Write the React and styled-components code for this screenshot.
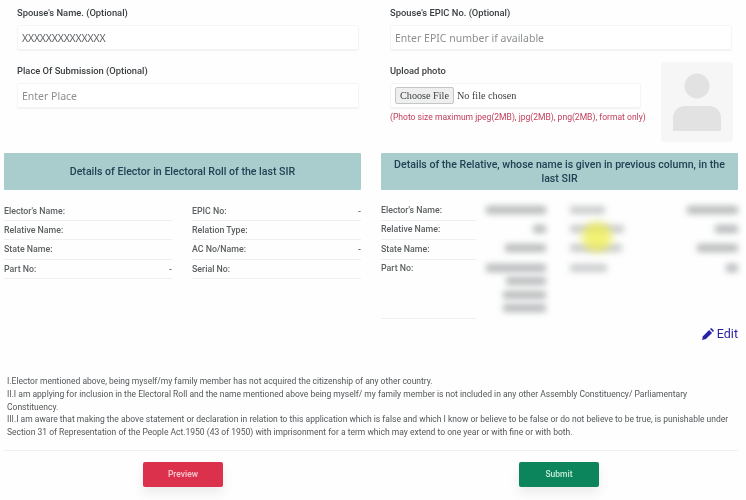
import React from 'react';
import styled, { createGlobalStyle } from 'styled-components';

const Global = createGlobalStyle`
    html, body {
        margin: 0;
        padding: 0;
        background: #fdfefd;
    }
    body {
        font-family: Roboto, "Liberation Sans", sans-serif;
        color: #3c4043;
    }
`

const Page = styled.div`
    position: relative;
    width: 746px;
    height: 500px;
    overflow: hidden;
    filter: blur(0.35px);
`

const FormGrid = styled.div`
    display: grid;
    grid-template-columns: 342px 342px;
    column-gap: 31px;
    padding: 7px 0 0 17px;
`

const Field = styled.div`
    display: flex;
    flex-direction: column;
    height: 58px;
`

const FieldLabel = styled.label`
    font-size: 9.35px;
    font-weight: 500;
    line-height: 12px;
    color: #3a3d40;
    margin-bottom: 6px;
`

const TextInput = styled.input`
    box-sizing: border-box;
    width: 100%;
    height: 25px;
    padding: 0 4px;
    border: 1px solid #f4f5f5;
    border-radius: 2px;
    box-shadow: 0 1px 1px rgba(0, 0, 0, 0.05);
    background: #fff;
    outline: none;
    font-family: "Noto Sans", sans-serif;
    font-size: 10.5px;
    letter-spacing: -0.2px;
    color: #5f6265;

    &::placeholder {
        color: #8c8f91;
        letter-spacing: 0;
        opacity: 1;
    }
`

const UploadRow = styled.div`
    display: flex;
    justify-content: space-between;
    height: 77px;
`

const UploadCol = styled.div`
    display: flex;
    flex-direction: column;
    width: 251px;
`

const FileBox = styled.div`
    box-sizing: border-box;
    display: flex;
    align-items: center;
    height: 25px;
    padding: 0 4px;
    border: 1px solid #f4f5f5;
    border-radius: 2px;
    box-shadow: 0 1px 1px rgba(0, 0, 0, 0.05);
    background: #fff;
`

const FileInput = styled.input`
    font-family: "Liberation Serif", serif;
    font-size: 10.2px;
    color: #3c4043;

    &::file-selector-button {
        font-family: "Liberation Serif", serif;
        font-size: 10.2px;
        height: 17px;
        padding: 0 4px;
        margin-right: 3px;
        border: 1px solid #c4c6c6;
        border-radius: 2px;
        background: #efefef;
        color: #3c4043;
    }
`

const Hint = styled.div`
    margin-top: 4px;
    font-size: 8.55px;
    line-height: 10px;
    color: #c2405c;
    white-space: nowrap;
`

const Avatar = styled.div`
    width: 72px;
    height: 80px;
    margin: -3px -1px 0 0;
    border-radius: 4px;
    background: #f6f6f6;
    overflow: hidden;
    flex-shrink: 0;
`

const Details = styled.div`
    display: grid;
    grid-template-columns: 357px 357px;
    column-gap: 20px;
    padding: 11px 0 0 4px;
`

const Panel = styled.section`
    min-width: 0;
`

const Banner = styled.h3`
    box-sizing: border-box;
    display: flex;
    align-items: center;
    justify-content: center;
    height: 37px;
    margin: 0 0 11.5px;
    padding: 0 8px;
    background: #a9cdcd;
    border-radius: 1px;
    text-align: center;
    font-size: 10.6px;
    font-weight: 500;
    line-height: 13.5px;
    color: #1f4254;
`

const InfoGrid = styled.div`
    display: grid;
    grid-template-columns: 168px 169px;
    column-gap: 20px;
`

const InfoRow = styled.div`
    box-sizing: border-box;
    display: flex;
    justify-content: space-between;
    align-items: center;
    height: 19.4px;
    border-bottom: 1px solid #eff1f1;
    font-size: 8.8px;
    font-weight: 500;
    color: #5c5f61;
`

const RelativeRow = styled.div`
    display: grid;
    grid-template-columns: 95px 1fr;
    min-height: ${p => (p.$tall ? '59.5px' : '19.4px')};
    font-size: 8.8px;
    font-weight: 500;
    color: #5c5f61;
`

const RelativeLabel = styled.div`
    box-sizing: border-box;
    padding-top: 3.5px;
    border-bottom: 1px solid #eff1f1;
    line-height: 10px;
`

const BlurRow = styled.div`
    display: grid;
    grid-template-columns: 70px 1fr 70px;
    column-gap: 24px;
    padding-top: 4px;
`

const BlurStack = styled.div`
    display: flex;
    flex-direction: column;
    align-items: ${p => (p.$start ? 'flex-start' : 'flex-end')};
    gap: 5.5px;
`

const Smudge = styled.div`
    width: ${p => p.$w}px;
    height: 8px;
    background: #9b9da0;
    border-radius: 2px;
    filter: blur(3px);
    opacity: ${p => p.$o || 0.7};
`

const Highlight = styled.div`
    position: absolute;
    left: 582px;
    top: 222px;
    width: 30px;
    height: 30px;
    border-radius: 50%;
    background: #eeee4a;
    opacity: 0.75;
    filter: blur(4px);
`

const EditLink = styled.a`
    display: flex;
    justify-content: flex-end;
    align-items: center;
    gap: 3px;
    margin-top: 7px;
    font-size: 12.5px;
    line-height: 16px;
    color: #2a22a6;
`

const Legal = styled.div`
    margin: 33px 0 0 7px;
    width: 732px;
    font-size: 8.5px;
    line-height: 12.7px;
    color: #54575a;
`

const Divider = styled.hr`
    margin: 11px 8px 0 4px;
    border: 0;
    border-top: 1px solid #eeefef;
`

const Actions = styled.div`
    display: grid;
    grid-template-columns: 80px 80px;
    column-gap: 296px;
    padding: 11px 0 0 143px;
`

const ActionButton = styled.button`
    height: 25px;
    border: 0;
    border-radius: 2px;
    background: ${p => p.$bg};
    color: ${p => p.$fg};
    font-family: Roboto, sans-serif;
    font-size: 8.5px;
    font-weight: 500;
    box-shadow: 0 6px 12px rgba(0, 0, 0, 0.08);
`

const leftRows = [
    ["Elector's Name:", ''],
    ['EPIC No:', '-'],
    ['Relative Name:', ''],
    ['Relation Type:', ''],
    ['State Name:', ''],
    ['AC No/Name:', '-'],
    ['Part No:', '-'],
    ['Serial No:', ''],
]

const relativeRows = [
    { label: "Elector's Name:", a: [60], b: 35, c: 51 },
    { label: 'Relative Name:', a: [13], b: 54, c: 23 },
    { label: 'State Name:', a: [41], b: 52, c: 41 },
    { label: 'Part No:', a: [60, 40, 43, 43], b: 37, c: 12, tall: true },
]

const Person = () => (
    <svg width="72" height="80" viewBox="0 0 72 80">
        <circle cx="36" cy="24" r="12.5" fill="#e2e2e2" />
        <path d="M12 69V56C12 49 17 44 24 44H48C55 44 60 49 60 56V69Z" fill="#e2e2e2" />
    </svg>
)

const Pencil = () => (
    <svg width="13" height="13" viewBox="0 0 24 24" fill="#2a22a6">
        <path d="M2 22l1.6-7L15 3.6l5.4 5.4L9 20.4z" />
        <path d="M16.6 2l1-1c.8-.7 1.8-.7 2.5 0l3 3c.7.7.7 1.7 0 2.4l-1 1z" />
    </svg>
)

const App = () => {
    return (
        <Page>
            <Global />
            <FormGrid>
                <Field>
                    <FieldLabel>Spouse's Name. (Optional)</FieldLabel>
                    <TextInput defaultValue="XXXXXXXXXXXXXX" />
                </Field>
                <Field>
                    <FieldLabel>Spouse's EPIC No. (Optional)</FieldLabel>
                    <TextInput placeholder="Enter EPIC number if available" />
                </Field>
                <Field>
                    <FieldLabel>Place Of Submission (Optional)</FieldLabel>
                    <TextInput placeholder="Enter Place" />
                </Field>
                <UploadRow>
                    <UploadCol>
                        <FieldLabel>Upload photo</FieldLabel>
                        <FileBox>
                            <FileInput type="file" />
                        </FileBox>
                        <Hint>(Photo size maximum jpeg(2MB), jpg(2MB), png(2MB), format only)</Hint>
                    </UploadCol>
                    <Avatar>
                        <Person />
                    </Avatar>
                </UploadRow>
            </FormGrid>

            <Details>
                <Panel>
                    <Banner>Details of Elector in Electoral Roll of the last SIR</Banner>
                    <InfoGrid>
                        {leftRows.map(([label, value]) => (
                            <InfoRow key={label}>
                                <span>{label}</span>
                                <span>{value}</span>
                            </InfoRow>
                        ))}
                    </InfoGrid>
                </Panel>
                <Panel>
                    <Banner>Details of the Relative, whose name is given in previous column, in the last SIR</Banner>
                    {relativeRows.map(row => (
                        <RelativeRow key={row.label} $tall={row.tall}>
                            <RelativeLabel>{row.label}</RelativeLabel>
                            <BlurRow>
                                <BlurStack>
                                    {row.a.map((w, i) => <Smudge key={i} $w={w} />)}
                                </BlurStack>
                                <BlurStack $start>
                                    <Smudge $w={row.b} $o={0.5} />
                                </BlurStack>
                                <BlurStack>
                                    <Smudge $w={row.c} />
                                </BlurStack>
                            </BlurRow>
                        </RelativeRow>
                    ))}
                    <EditLink><Pencil />Edit</EditLink>
                </Panel>
            </Details>

            <Highlight />

            <Legal>
                I.Elector mentioned above, being myself/my family member has not acquired the citizenship of any other country.<br />
                II.I am applying for inclusion in the Electoral Roll and the name mentioned above being myself/ my family member is not included in any other Assembly Constituency/ Parliamentary Constituency.<br />
                III.I am aware that making the above statement or declaration in relation to this application which is false and which I know or believe to be false or do not believe to be true, is punishable under Section 31 of Representation of the People Act.1950 (43 of 1950) with imprisonment for a term which may extend to one year or with fine or with both.
            </Legal>
            <Divider />
            <Actions>
                <ActionButton $bg="#dc314d" $fg="#f6c9d0">Preview</ActionButton>
                <ActionButton $bg="#0d855c" $fg="#c4ecd9">Submit</ActionButton>
            </Actions>
        </Page>
    )
}

export default App
